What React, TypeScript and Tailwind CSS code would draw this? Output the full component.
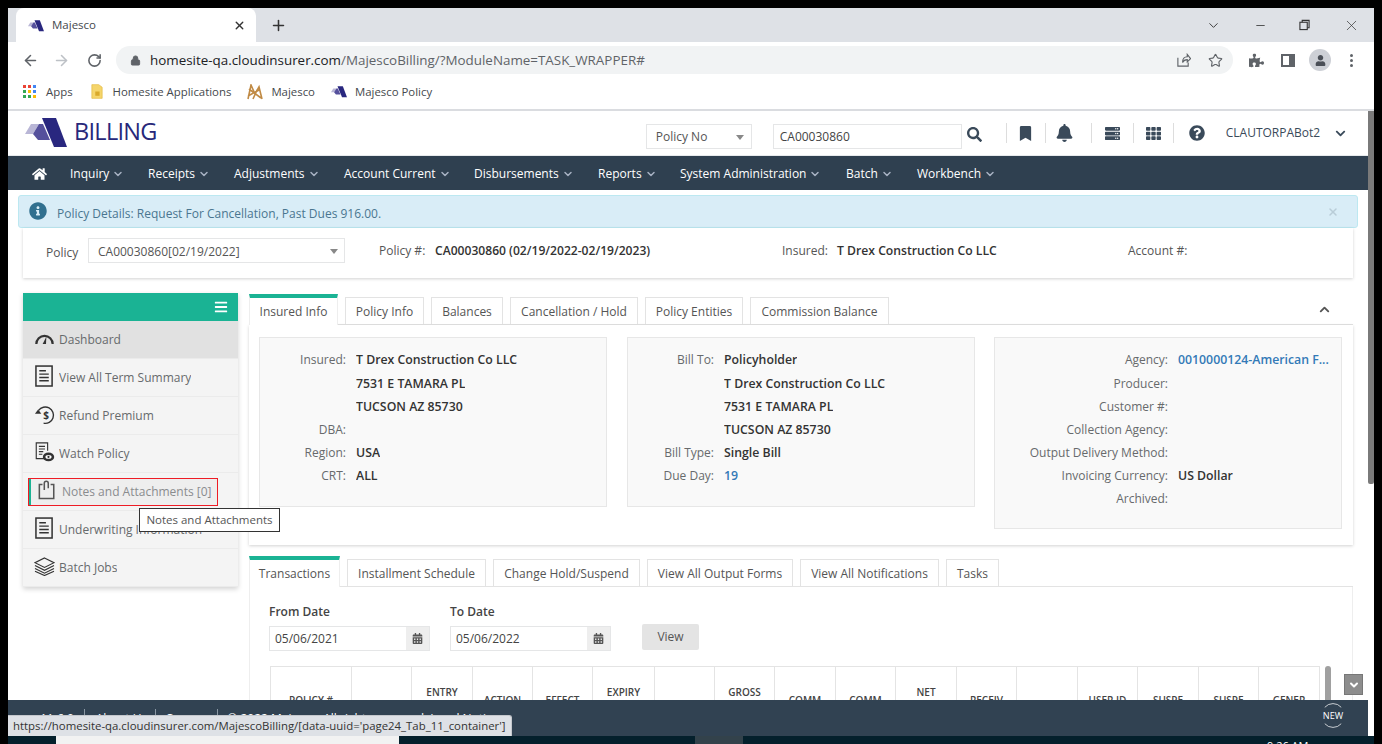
import React from 'react';
import { X, Plus, ArrowLeft, ArrowRight, RotateCw, Lock, Star, ChevronDown, ChevronUp, Minus } from 'lucide-react';
import { FaHome, FaBookmark, FaBell, FaQuestionCircle, FaSearch, FaCalendarAlt, FaBars, FaTh, FaChevronDown, FaPuzzlePiece, FaUser, FaInfoCircle, FaServer } from 'react-icons/fa';

const navItems = [
  { label: 'Inquiry', cls: 'w-[78px]' },
  { label: 'Receipts', cls: 'w-[86px]' },
  { label: 'Adjustments', cls: 'w-[110px]' },
  { label: 'Account Current', cls: 'w-[130px]' },
  { label: 'Disbursements', cls: 'w-[124px]' },
  { label: 'Reports', cls: 'w-[82px]' },
  { label: 'System Administration', cls: 'w-[166px]' },
  { label: 'Batch', cls: 'w-[71px]' },
  { label: 'Workbench', cls: 'w-[90px]' },
];

const tableCols = [
  { label: 'POLICY #', two: false, w: 'w-[81px]' },
  { label: '', two: false, w: 'w-[60px]' },
  { label: 'ENTRY', two: true, w: 'w-[61px]' },
  { label: 'ACTION', two: false, w: 'w-[60px]' },
  { label: 'EFFECT', two: false, w: 'w-[60px]' },
  { label: 'EXPIRY', two: true, w: 'w-[62px]' },
  { label: '', two: false, w: 'w-[60px]' },
  { label: 'GROSS', two: true, w: 'w-[60px]' },
  { label: 'COMM', two: false, w: 'w-[61px]' },
  { label: 'COMM', two: false, w: 'w-[60px]' },
  { label: 'NET', two: true, w: 'w-[61px]' },
  { label: 'RECEIV', two: false, w: 'w-[60px]' },
  { label: '', two: false, w: 'w-[61px]' },
  { label: 'USER ID', two: false, w: 'w-[60px]' },
  { label: 'SUSPE', two: false, w: 'w-[61px]' },
  { label: 'SUSPE', two: false, w: 'w-[60px]' },
  { label: 'GENER', two: false, w: 'w-[61px]' },
];

const appsDots = ['#ea4335', '#ea4335', '#4285f4', '#34a853', '#fbbc04', '#4285f4', '#34a853', '#34a853', '#fbbc04'];

const MajescoMark: React.FC<{ className?: string }> = ({ className }) => (
  <svg viewBox="0 0 42 30" className={className}>
    <path d="M0 17 L6 7 L14 7 L8 17 Z" fill="#b9b6d6" />
    <path d="M8 17 L14 7 L18 7 L25 23 L13 23 Z" fill="#55509c" />
    <path d="M17 1 L31 1 L42 30 L29 30 Z" fill="#29277f" />
  </svg>
);

const DocIcon: React.FC = () => (
  <svg viewBox="0 0 20 24" className="w-[19px] h-[23px]" fill="none" stroke="#333" strokeWidth="1.6">
    <rect x="1" y="1" width="17" height="21" />
    <path d="M4.5 6h7M4.5 9.5h10M4.5 13h10M4.5 16.5h10" strokeWidth="1.5" />
  </svg>
);

const GaugeIcon: React.FC = () => (
  <svg viewBox="0 0 22 14" className="w-[21px] h-[13px]" fill="#333">
    <path d="M1 13 A10 10 0 0 1 21 13 L18.6 13 A7.6 7.6 0 0 0 3.4 13 Z" />
    <path d="M9 13 L13 5 L12.6 13 Z" />
  </svg>
);

const RefundIcon: React.FC = () => (
  <svg viewBox="0 0 22 22" className="w-[21px] h-[20px]" fill="none" stroke="#333" strokeWidth="1.5">
    <path d="M4.5 6 A9 9 0 1 1 10 20" />
    <path d="M0.5 9.5 L7.5 9.5 L4 5 Z" fill="#333" stroke="none" />
    <text x="9.5" y="15" fontSize="11" fontWeight="700" fill="#333" stroke="none" fontFamily="'Open Sans', sans-serif">$</text>
  </svg>
);

const WatchIcon: React.FC = () => (
  <svg viewBox="0 0 22 24" className="w-[20px] h-[21px]" fill="none" stroke="#333" strokeWidth="1.3">
    <path d="M13 19H1V1h13v9" />
    <path d="M4 5h7M4 8h7M4 11h5M4 14h4" />
    <ellipse cx="15" cy="17" rx="6.5" ry="5" fill="#333" stroke="none" />
    <ellipse cx="15" cy="17" rx="3.5" ry="2.2" fill="#fff" stroke="none" />
    <circle cx="15" cy="17" r="1.2" fill="#333" stroke="none" />
  </svg>
);

const AttachIcon: React.FC = () => (
  <svg viewBox="0 0 20 22" className="w-[18px] h-[20px]" fill="none" stroke="#555" strokeWidth="1.7">
    <path d="M5 5H1.5v15.5h16V5H14" />
    <path d="M7 11V3.5a2.2 2.2 0 0 1 4.4 0V9" />
  </svg>
);

const LayersIcon: React.FC = () => (
  <svg viewBox="0 0 22 20" className="w-[21px] h-[19px]" fill="none" stroke="#333" strokeWidth="1.2">
    <path d="M11 1 L21 6 L11 11 L1 6 Z" />
    <path d="M1 9 L11 14 L21 9M1 12 L11 17 L21 12M1 15 L11 19.5 L21 15" />
  </svg>
);

const BookmarkFolder: React.FC = () => (
  <svg viewBox="0 0 14 16" className="w-[12px] h-[15px]">
    <path d="M1 0h8l4 3v13H1z" fill="#f5d56b" stroke="#e3b93f" strokeWidth="0.8" />
    <path d="M5 8h5v5H5z" fill="#d9a92b" />
  </svg>
);

const SidebarRow: React.FC<{ icon: React.ReactNode; label: string; selected?: boolean }> = ({ icon, label, selected }) => (
  <div className={`h-[38px] flex items-center border-b border-[#ebebeb] pl-[7px] text-[12px] ${selected ? 'bg-[#e1e1e1]' : 'bg-[#f4f4f4]'}`}>
    <span className="w-[29px] flex justify-center shrink-0 -mt-[2px]">{icon}</span>
    <span className="text-[#676a6c] truncate">{label}</span>
  </div>
);

const Tab: React.FC<{ label: string; active?: boolean; w: string }> = ({ label, active, w }) =>
  active ? (
    <div className={`${w} h-[31px] bg-white border-t-[4px] border-[#1ab394] -mb-px border-x border-x-[#eeeeee] flex items-center justify-center text-[#555] text-[12px] shrink-0`}>
      {label}
    </div>
  ) : (
    <div className={`${w} h-[27px] pt-px bg-white border border-[#e3e3e3] border-b-0 flex items-center justify-center text-[#555] text-[12px] shrink-0`}>
      {label}
    </div>
  );

const InfoRow: React.FC<{ label?: string; value?: string; link?: boolean; labelW: string }> = ({ label, value, link, labelW }) => (
  <div className="h-[23px] first:h-[24px] flex items-center text-[12px] leading-[16px]">
    <span className={`${labelW} text-right text-[#676a6c] shrink-0`}>{label}</span>
    <span className={`ml-[10px] text-[12.3px] leading-[16px] font-semibold truncate ${link ? 'text-[#337ab7]' : 'text-[#333]'}`}>{value}</span>
  </div>
);

const DateField: React.FC<{ label: string; value: string }> = ({ label, value }) => (
  <div className="w-[161px]">
    <div className="font-semibold text-[12px] text-[#444] h-[18px] leading-[18px]">{label}</div>
    <div className="mt-[5px] h-[25px] flex border border-[#e5e6e7] text-[12px] text-[#444]">
      <span className="flex-1 pl-[5px] leading-[24px]">{value}</span>
      <span className="w-[23px] bg-[#eeeeee] flex items-center justify-center">
        <FaCalendarAlt className="text-[#555] text-[11px]" />
      </span>
    </div>
  </div>
);

const App: React.FC = () => {
  return (
    <div className="relative w-[1382px] h-[744px] bg-black overflow-hidden pt-2 pl-2 pr-2 [font-family:'Open_Sans',sans-serif]">
      <div className="w-[1366px] h-[728px] bg-white flex flex-col overflow-hidden">
        {/* browser tabs */}
        <div className="h-[34px] bg-[#dee1e6] flex items-end pl-2 shrink-0">
          <div className="w-[240px] h-[34px] bg-white rounded-t-lg flex items-center pl-[12px] pr-[10px]">
            <MajescoMark className="w-[16px] h-[15px]" />
            <span className="ml-[8px] text-[11.5px] text-[#45494d]">Majesco</span>
            <X className="ml-auto w-[13px] h-[13px] text-[#333]" strokeWidth={2.5} />
          </div>
          <Plus className="ml-[14px] mb-[8px] w-[17px] h-[17px] text-[#333]" strokeWidth={2.2} />
          <div className="ml-auto flex items-center h-[34px] text-[#333]">
            <ChevronDown className="w-[15px] h-[15px] mr-[33px]" strokeWidth={1.5} />
            <Minus className="w-[13px] h-[13px] mr-[32px]" strokeWidth={1.5} />
            <svg viewBox="0 0 12 12" className="w-[11px] h-[12px] mr-[33px]" fill="none" stroke="#333" strokeWidth="1.2">
              <rect x="1" y="3" width="8" height="8" />
              <path d="M3.5 3V1h7.5v8H9" />
            </svg>
            <X className="w-[17px] h-[17px] mr-[14px]" strokeWidth={1} />
          </div>
        </div>
        {/* address bar */}
        <div className="h-[36px] flex items-center shrink-0 bg-white">
          <ArrowLeft className="ml-[14px] w-[17px] h-[17px] text-[#5f6368]" strokeWidth={2.2} />
          <ArrowRight className="ml-[14px] w-[17px] h-[17px] text-[#bdc1c6]" strokeWidth={2.2} />
          <RotateCw className="ml-[17px] w-[15px] h-[15px] text-[#5f6368]" strokeWidth={2.5} />
          <div className="ml-[14px] w-[1117px] h-[28px] rounded-full bg-[#f1f3f4] flex items-center pl-[14px] pr-[10px]">
            <Lock className="w-[11px] h-[11px] text-[#5f6368]" fill="#5f6368" />
            <span className="ml-[9px] mt-px text-[13.4px] text-[#202124] leading-none">
              homesite-qa.cloudinsurer.com<span className="text-[#5f6368]">/MajescoBilling/?ModuleName=TASK_WRAPPER#</span>
            </span>
            <svg viewBox="0 0 16 16" className="ml-auto w-[15px] h-[15px]" fill="none" stroke="#5f6368" strokeWidth="1.2">
              <path d="M2 5v9h11v-4M7 10c0-4 2-6 5-6V1.5L15.5 6 12 9.5V7c-2 0-4 1-5 3z" />
            </svg>
            <Star className="ml-[17px] w-[15px] h-[15px] text-[#5f6368]" strokeWidth={1.8} />
          </div>
          <FaPuzzlePiece className="ml-[16px] w-[15px] h-[15px] text-[#5f6368]" />
          <span className="ml-[17px] w-[14px] h-[13px] border-[2px] border-[#5f6368] border-r-[6px]" />
          <span className="ml-[14px] w-[22px] h-[22px] rounded-full bg-[#cdd0d6] flex items-center justify-center">
            <FaUser className="w-[11px] h-[11px] text-[#4a4f57]" />
          </span>
          <span className="ml-[19px] flex flex-col gap-[2px]">
            <span className="w-[3px] h-[3px] rounded-full bg-[#5f6368]" />
            <span className="w-[3px] h-[3px] rounded-full bg-[#5f6368]" />
            <span className="w-[3px] h-[3px] rounded-full bg-[#5f6368]" />
          </span>
        </div>
        {/* bookmarks */}
        <div className="h-[33px] flex items-center border-b-2 border-[#dadce0] text-[11.4px] text-[#45494d] shrink-0 pb-[4px]">
          <span className="ml-[15px] w-[13px] h-[13px] grid grid-cols-3 gap-[2px]">
            {appsDots.map((color, i) => (
              <span key={i} style={{ backgroundColor: color }} className="w-[3px] h-[3px]" />
            ))}
          </span>
          <span className="ml-[10px]">Apps</span>
          <span className="ml-[18px]"><BookmarkFolder /></span>
          <span className="ml-[10px]">Homesite Applications</span>
          <span className="ml-[16px] w-[16px] h-[16px] shrink-0">
            <svg viewBox="0 0 16 16" fill="none" stroke="#c08a44" strokeWidth="1.6" className="w-[16px] h-[16px]">
              <path d="M1 15 L4 1 L8 10 L12 3 L15 15 M2 5 L14 14 M1 12 L12 6 M6 15 L10 6" />
            </svg>
          </span>
          <span className="ml-[8px]">Majesco</span>
          <MajescoMark className="ml-[16px] w-[16px] h-[15px]" />
          <span className="ml-[8px]">Majesco Policy</span>
        </div>

        {/* page viewport */}
        <div className="relative flex-1 flex overflow-hidden min-h-0">
          <div className="flex-1 min-w-0 overflow-hidden flex flex-col">
            {/* app header */}
            <div className="h-[45px] flex items-center shrink-0 border-b border-[#e7eaec]">
              <MajescoMark className="ml-[17px] w-[42px] h-[30px] -mt-[2px]" />
              <span className="ml-[7px] -mt-[2px] text-[23.5px] leading-none text-[#28287a] tracking-[-0.7px] font-medium">BILLING</span>
              <div className="ml-[489px] mt-[6px] w-[106px] h-[25px] pt-[2px] border border-[#e5e6e7] flex items-center pl-[9px] text-[12px] text-[#555]">
                Policy No
                <span className="ml-auto mr-[7px] border-x-[4px] border-x-transparent border-t-[5px] border-t-[#888]" />
              </div>
              <div className="ml-[21px] mt-[6px] w-[189px] h-[25px] pt-[2px] border border-[#e5e6e7] flex items-center pl-[6px] text-[12px] text-[#444]">CA00030860</div>
              <FaSearch className="ml-[5px] mt-[2px] w-[15px] h-[15px] text-[#3a4a5a]" />
              <span className="ml-[24px] w-px h-[20px] bg-[#dddddd]" />
              <FaBookmark className="ml-[12px] w-[13px] h-[15px] text-[#3a4a5a]" />
              <span className="ml-[13px] w-px h-[20px] bg-[#dddddd]" />
              <FaBell className="ml-[10px] w-[17px] h-[18px] text-[#3a4a5a]" />
              <span className="ml-[18px] w-px h-[20px] bg-[#dddddd]" />
              <FaServer className="ml-[13px] w-[15px] h-[15px] text-[#3a4a5a]" />
              <span className="ml-[13px] w-px h-[20px] bg-[#dddddd]" />
              <FaTh className="ml-[12px] w-[15px] h-[15px] text-[#3a4a5a]" />
              <span className="ml-[12px] w-px h-[20px] bg-[#dddddd]" />
              <FaQuestionCircle className="ml-[15px] w-[16px] h-[16px] text-[#3a4a5a]" />
              <span className="ml-[21px] text-[12px] text-[#3a4a5a]">CLAUTORPABot2</span>
              <FaChevronDown className="ml-[15px] w-[11px] h-[11px] text-[#3a4a5a]" />
            </div>
            {/* nav */}
            <div className="h-[34px] bg-[#2f4050] flex items-center shrink-0 pl-[24px] pt-px text-white text-[12px]">
              <FaHome className="w-[15px] h-[14px] mr-[23px]" />
              {navItems.map((item) => (
                <div key={item.label} className={`${item.cls} flex items-center shrink-0`}>
                  {item.label}
                  <ChevronDown className="ml-[3px] w-[12px] h-[12px] text-[#a7b1c2]" strokeWidth={3} />
                </div>
              ))}
            </div>
            {/* alert */}
            <div className="mt-[5px] mx-[10px] h-[33px] shrink-0 rounded-[3px] bg-[#d9edf7] border border-[#bce8f1] flex items-center pl-[10px] pr-[18px] text-[12px] text-[#4a7690]">
              <FaInfoCircle className="w-[18px] h-[18px] text-[#31708f] -mt-[1px]" />
              <span className="ml-[10px] mt-[5px]">Policy Details: Request For Cancellation, Past Dues 916.00.</span>
              <X className="ml-auto w-[12px] h-[12px] text-[#b9cdd8]" strokeWidth={3} />
            </div>
            {/* policy bar */}
            <div className="mx-[15px] h-[50px] shrink-0 bg-white shadow-[0_1px_3px_rgba(0,0,0,0.18)] flex items-start text-[12px] text-[#555] pl-[23px] pt-[10px]">
              <span className="mt-[6px] w-[33px] shrink-0">Policy</span>
              <div className="ml-[9px] w-[257px] h-[25px] pt-[2px] border border-[#e5e6e7] flex items-center pl-[9px] shrink-0">
                CA00030860[02/19/2022]
                <span className="ml-auto mr-[6px] border-x-[4px] border-x-transparent border-t-[5px] border-t-[#888]" />
              </div>
              <span className="ml-[34px] mt-[4px] w-[46px] shrink-0 whitespace-nowrap">Policy #:</span>
              <span className="ml-[10px] mt-[4px] text-[12.1px] font-semibold text-[#333] w-[347px] shrink-0">CA00030860 (02/19/2022-02/19/2023)</span>
              <span className="mt-[4px] w-[45px] shrink-0">Insured:</span>
              <span className="ml-[10px] mt-[4px] text-[12.2px] font-semibold text-[#333] w-[291px] shrink-0">T Drex Construction Co LLC</span>
              <span className="mt-[4px]">Account #:</span>
            </div>

            {/* body */}
            <div className="mt-[15px] flex items-start shrink-0">
              {/* side menu */}
              <div className="relative ml-[15px] w-[215px] shrink-0 shadow-[0_2px_5px_rgba(0,0,0,0.18)]">
                <div className="h-[28px] bg-[#1ab394] flex items-center justify-end pr-[10px]">
                  <FaBars className="w-[14px] h-[14px] text-white" />
                </div>
                <SidebarRow selected icon={<GaugeIcon />} label="Dashboard" />
                <SidebarRow icon={<DocIcon />} label="View All Term Summary" />
                <SidebarRow icon={<RefundIcon />} label="Refund Premium" />
                <SidebarRow icon={<WatchIcon />} label="Watch Policy" />
                <div className="h-[38px] bg-[#f4f4f4] border-b border-[#ebebeb] pt-[5px] pl-[5px]">
                  <div className="w-[190px] h-[28px] border border-[#ee1c25] bg-[#eeeeee] flex items-center">
                    <span className="h-full w-[2px] bg-[#1ab394]" />
                    <span className="w-[31px] flex justify-center shrink-0 -mt-[5px]"><AttachIcon /></span>
                    <span className="text-[12px] text-[#8a8c8e] whitespace-nowrap">Notes and Attachments [0]</span>
                  </div>
                </div>
                <SidebarRow icon={<DocIcon />} label="Underwriting Information" />
                <SidebarRow icon={<LayersIcon />} label="Batch Jobs" />
                {/* tooltip */}
                <div className="absolute left-[116px] top-[215px] w-[141px] h-[24px] bg-white border border-[#333] z-10 flex items-center justify-center text-[11.5px] text-[#555]">
                  Notes and Attachments
                </div>
              </div>

              {/* right column */}
              <div className="ml-[11px] w-[1104px] shrink-0">
                <div className="flex items-end gap-[7px] h-[32px] border-b border-[#e3e3e3]">
                  <Tab active label="Insured Info" w="w-[89px]" />
                  <Tab label="Policy Info" w="w-[79px]" />
                  <Tab label="Balances" w="w-[72px]" />
                  <Tab label="Cancellation / Hold" w="w-[128px]" />
                  <Tab label="Policy Entities" w="w-[98px]" />
                  <Tab label="Commission Balance" w="w-[139px]" />
                  <ChevronUp className="ml-auto mr-[21px] mb-[7px] w-[15px] h-[15px] text-[#555]" strokeWidth={3} />
                </div>
                <div className="h-[220px] bg-white shadow-[0_1px_3px_rgba(0,0,0,0.18)] flex items-start pl-[10px] pt-[12px]">
                  <div className="w-[348px] h-[170px] bg-[#f9f9f9] border border-[#e7e7e7] pt-[10px]">
                    <InfoRow labelW="w-[86px]" label="Insured:" value="T Drex Construction Co LLC" />
                    <InfoRow labelW="w-[86px]" value="7531 E TAMARA PL" />
                    <InfoRow labelW="w-[86px]" value="TUCSON AZ 85730" />
                    <InfoRow labelW="w-[86px]" label="DBA:" />
                    <InfoRow labelW="w-[86px]" label="Region:" value="USA" />
                    <InfoRow labelW="w-[86px]" label="CRT:" value="ALL" />
                  </div>
                  <div className="ml-[20px] w-[348px] h-[170px] bg-[#f9f9f9] border border-[#e7e7e7] pt-[10px]">
                    <InfoRow labelW="w-[86px]" label="Bill To:" value="Policyholder" />
                    <InfoRow labelW="w-[86px]" value="T Drex Construction Co LLC" />
                    <InfoRow labelW="w-[86px]" value="7531 E TAMARA PL" />
                    <InfoRow labelW="w-[86px]" value="TUCSON AZ 85730" />
                    <InfoRow labelW="w-[86px]" label="Bill Type:" value="Single Bill" />
                    <InfoRow labelW="w-[86px]" label="Due Day:" value="19" link />
                  </div>
                  <div className="ml-[19px] w-[348px] h-[192px] bg-[#f9f9f9] border border-[#e7e7e7] pt-[10px]">
                    <InfoRow labelW="w-[173px]" label="Agency:" value="0010000124-American F..." link />
                    <InfoRow labelW="w-[173px]" label="Producer:" />
                    <InfoRow labelW="w-[173px]" label="Customer #:" />
                    <InfoRow labelW="w-[173px]" label="Collection Agency:" />
                    <InfoRow labelW="w-[173px]" label="Output Delivery Method:" />
                    <InfoRow labelW="w-[173px]" label="Invoicing Currency:" value="US Dollar" />
                    <InfoRow labelW="w-[173px]" label="Archived:" />
                  </div>
                </div>

                <div className="mt-[10px] flex items-end gap-[7px] h-[32px] border-b border-[#e3e3e3]">
                  <Tab active label="Transactions" w="w-[91px]" />
                  <Tab label="Installment Schedule" w="w-[139px]" />
                  <Tab label="Change Hold/Suspend" w="w-[147px]" />
                  <Tab label="View All Output Forms" w="w-[146px]" />
                  <Tab label="View All Notifications" w="w-[139px]" />
                  <Tab label="Tasks" w="w-[53px]" />
                </div>
                <div className="bg-white border-l border-r border-[#eeeeee] pl-[19px] pt-[16px] h-[160px]">
                  <div className="flex items-end">
                    <DateField label="From Date" value="05/06/2021" />
                    <div className="ml-[20px]"><DateField label="To Date" value="05/06/2022" /></div>
                    <div className="ml-[31px] mb-px w-[57px] h-[26px] bg-[#e4e4e4] rounded-[2px] flex items-center justify-center text-[12px] text-[#555]">View</div>
                  </div>
                  <div className="mt-[15px] ml-px flex items-start">
                    <div className="flex h-[68px] border border-[#e4e4e4] w-[1050px] shrink-0">
                      {tableCols.map((c, i) => (
                        <div key={i} className={`${c.w} shrink-0 flex flex-col items-center justify-center border-r border-[#e4e4e4] text-[10px] font-semibold text-[#444] leading-[16px]`}>
                          <span>{c.label}</span>
                          {c.two && <span className="h-[16px]" />}
                        </div>
                      ))}
                    </div>
                    <span className="ml-[5px] w-[6px] h-[68px] rounded-full bg-[#a0a0a0] shrink-0" />
                  </div>
                </div>
              </div>
            </div>
          </div>

          {/* page scrollbar */}
          <div className="w-[6px] shrink-0 bg-white">
            <div className="w-[6px] h-[373px] bg-[#7a7a7a] rounded-b-[2px]" />
          </div>

          {/* scroll-down button */}
          <div className="absolute left-[1336px] top-[563px] w-[19px] h-[21px] bg-[#8d8d8d] border border-[#777] flex items-center justify-center">
            <ChevronDown className="w-[12px] h-[12px] text-white" strokeWidth={4} />
          </div>

          {/* footer */}
          <div className="absolute left-0 right-[6px] bottom-0 h-[36px] bg-[#314252] pl-[32px] pt-[11px] flex items-start text-[12px] text-white leading-[16px]">
            <span>11.6.0</span>
            <span className="ml-[10px] -mt-[2px] w-px h-[16px] bg-[#8a97a3]" />
            <span className="ml-[11px]">About Us</span>
            <span className="ml-[8px] -mt-[2px] w-px h-[16px] bg-[#8a97a3]" />
            <span className="ml-[9px]">Careers</span>
            <span className="ml-[9px] -mt-[2px] w-px h-[16px] bg-[#8a97a3]" />
            <span className="ml-[9px]">© 2022 Majesco. All rights reserved. Legal Notice</span>
            <svg viewBox="0 0 24 34" className="ml-auto mr-[24px] w-[22px] h-[31px] -mt-[11px]" fill="none" stroke="#fff" strokeWidth="0.8">
              <path d="M3 8 A12 12 0 0 1 21 8M3 26 A12 12 0 0 0 21 26" />
              <text x="12" y="21" textAnchor="middle" fontSize="10" fill="#fff" stroke="none" fontFamily="'Open Sans', sans-serif">NEW</text>
            </svg>
          </div>

          {/* link hover status */}
          <div className="absolute left-0 bottom-0 h-[21px] w-[504px] bg-[#dee1e6] border-t border-r border-[#c4c7cc] rounded-tr-[3px] flex items-center pl-[5px] text-[11.4px] text-[#333]">
            https://homesite-qa.cloudinsurer.com/MajescoBilling/[data-uuid='page24_Tab_11_container']
          </div>
        </div>
      </div>

      {/* taskbar strip */}
      <div className="absolute left-2 right-2 bottom-0 h-[8px] bg-[#04202c] flex">
        <span className="ml-[48px] w-[343px] bg-[#f2f2f2]" />
        <span className="ml-[296px] w-[48px] bg-[#33424b]" />
        <span className="ml-[524px] text-[11px] leading-[14px] text-white pt-[3px]">9:26 AM</span>
      </div>
    </div>
  );
};

export default App;
